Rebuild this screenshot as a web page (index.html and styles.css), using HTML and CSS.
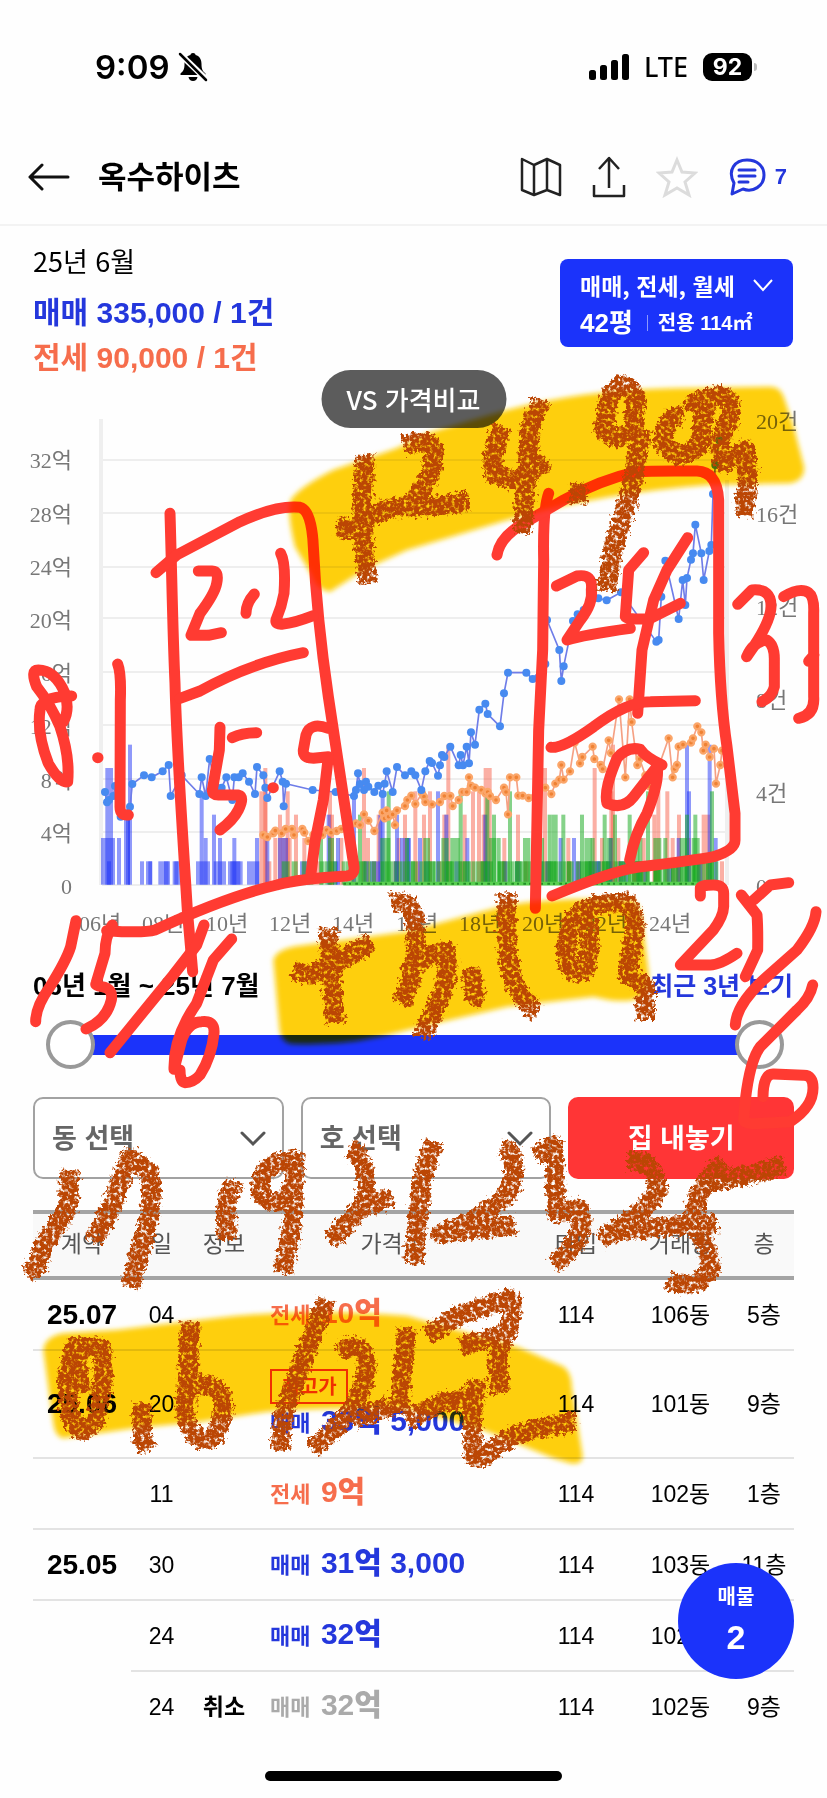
FILE: index.html
```html
<!DOCTYPE html>
<html lang="ko">
<head>
<meta charset="utf-8">
<meta name="viewport" content="width=device-width, initial-scale=1">
<title>옥수하이츠</title>
<link rel="stylesheet" href="styles.css">
</head>
<body>
<div class="page">
  <div class="status">
    <div class="status-left">
      <span class="clock">9:09</span>
      <svg width="30" height="32" viewBox="0 0 30 32"><path d="M15 2c-2 0-2.500 1-2.500 2C8 5 6.500 9 6.500 13c0 5-1 7-4 9.500V24h25v-1.500c-3-2.500-4-4.500-4-9.500 0-4-1.500-8-6-9 0-1-.5-2-2.500-2z"/><path d="M10.500 26h9c-.5 2.500-2 4-4.500 4s-4-1.500-4.500-4z"/><path d="M1 2l28 27" stroke="#fff" stroke-width="6"/><path d="M2 3l26 26" stroke="#000" stroke-width="2.500" stroke-linecap="round"/></svg>
    </div>
    <div class="status-right">
      <svg width="40" height="26" viewBox="0 0 40 26"><rect y="16" width="7" height="10" rx="2.500"/><rect x="11" y="11" width="7" height="15" rx="2.500"/><rect x="22" y="6" width="7" height="20" rx="2.500"/><rect x="33" width="7" height="26" rx="2.500"/></svg>
      <span class="network">LTE</span>
      <span class="battery"><span class="battery-body">92</span><i class="battery-tip"></i></span>
    </div>
  </div>

  <header class="header">
    <button class="icon-button" aria-label="뒤로"><svg width="42" height="28" viewBox="0 0 42 28" fill="none" stroke="#111" stroke-width="3" stroke-linecap="round" stroke-linejoin="round"><path d="M40 14H2M14 2L2 14l12 12"/></svg></button>
    <h1 class="title">옥수하이츠</h1>
    <nav class="actions">
      <button class="icon-button" aria-label="지도"><svg width="42" height="42" viewBox="0 0 42 42" fill="none" stroke="#222" stroke-width="2.500" stroke-linejoin="round"><path d="M2 3l12 6 13-6 13 6v30l-13-5-13 5-12-5zM14 9v30M27 3v31"/></svg></button>
      <button class="icon-button" aria-label="공유"><svg width="34" height="42" viewBox="0 0 34 42" fill="none" stroke="#222" stroke-width="2.500" stroke-linejoin="round"><path d="M17 32V2M7 13L17 2l10 11M2 29v11h30V29"/></svg></button>
      <button class="icon-button" aria-label="관심"><svg width="42" height="42" viewBox="0 0 42 42" fill="none" stroke="#dcdcdc" stroke-width="3"><path d="M21 4l5 12 13 1-10 9 4 13-12-7-12 7 4-13L3 17l13-1z"/></svg></button>
      <button class="chat" aria-label="댓글 7"><svg width="38" height="40" viewBox="0 0 38 40" fill="none" stroke="#2437dc" stroke-width="3" stroke-linejoin="round" stroke-linecap="round"><path d="M4 37l2-11C-1 13 7 3 19 3c10 0 17 6 17 15 0 11-11 18-21 14zM11 13h16M11 19h16M11 25h9"/></svg><span>7</span></button>
    </nav>
  </header>

  <main>
    <section class="summary">
      <div>
        <p class="month">25년 6월</p>
        <p class="deal sale">매매 335,000 / 1건</p>
        <p class="deal lease">전세 90,000 / 1건</p>
      </div>
      <button class="filter">
        <span class="filter-top">매매, 전세, 월세 <svg width="20" height="13" viewBox="0 0 20 13" fill="none" stroke="#fff" stroke-width="2"><path d="M1 1l9 10 9-10"/></svg></span>
        <span class="filter-bottom"><b>42평</b><i></i><small>전용 114㎡</small></span>
      </button>
    </section>

    <section class="chart">
      <svg class="chart-plot" viewBox="0 370 827 580" id="plot">
        <g class="grid-lines"><path d="M102 460H726M102 513H726M102 567H726M102 618H726M102 672H726M102 725H726M102 779H726M102 832H726M102 885H726"/></g>
        <path class="axis" d="M101 419V885M727 480V885"/>
        <g id="series" transform="translate(0 630) scale(.33333)"></g>
        <g class="labels" id="labels"></g>
      </svg>
      <button class="compare">VS 가격비교</button>
    </section>

    <section class="range">
      <div class="range-text"><span class="period">06년 1월 ~ 25년 7월</span><a href="#recent">최근 3년 보기</a></div>
      <div class="slider">
        <input class="slider-input track" type="range" min="0" max="100" value="0" aria-label="시작 월">
        <input class="slider-input" type="range" min="0" max="100" value="100" aria-label="종료 월">
      </div>
    </section>

    <section class="picker">
      <label class="field"><select aria-label="동 선택"><option>동 선택</option></select><svg width="26" height="16" viewBox="0 0 26 16"><path d="M2 2l11 11L24 2"/></svg></label>
      <label class="field"><select aria-label="호 선택"><option>호 선택</option></select><svg width="26" height="16" viewBox="0 0 26 16"><path d="M2 2l11 11L24 2"/></svg></label>
      <button class="sell">집 내놓기</button>
    </section>

    <table class="deals">
      <colgroup><col class="c-month"><col class="c-day"><col class="c-info"><col class="c-price"><col class="c-type"><col class="c-dong"><col class="c-floor"></colgroup>
      <thead><tr><th>계약</th><th>일</th><th>정보</th><th>가격 ↓</th><th>타입</th><th>거래동</th><th>층</th></tr></thead>
      <tbody>
        <tr><td class="ym">25.07</td><td>04</td><td></td><td class="price lease"><span>전세</span> <b>10억</b></td><td>114</td><td>106동</td><td>5층</td></tr>
        <tr class="record"><td class="ym">25.06</td><td>20</td><td></td><td class="price sale"><em>최고가</em><div><span>매매</span> <b>33억 5,000</b></div></td><td>114</td><td>101동</td><td>9층</td></tr>
        <tr><td></td><td>11</td><td></td><td class="price lease"><span>전세</span> <b>9억</b></td><td>114</td><td>102동</td><td>1층</td></tr>
        <tr><td class="ym">25.05</td><td>30</td><td></td><td class="price sale"><span>매매</span> <b>31억 3,000</b></td><td>114</td><td>103동</td><td>11층</td></tr>
        <tr><td class="open"></td><td>24</td><td></td><td class="price sale"><span>매매</span> <b>32억</b></td><td>114</td><td>102동</td><td>7층</td></tr>
        <tr class="last"><td></td><td>24</td><td class="cancel">취소</td><td class="price void"><span>매매</span> <b>32억</b></td><td>114</td><td>102동</td><td>9층</td></tr>
      </tbody>
    </table>
  </main>

  <button class="listing"><span>매물</span><b>2</b></button>
  <div class="home"></div>

  <svg class="ink pen" viewBox="0 0 2481 5394" aria-hidden="true">
    <g id="pen-left">
      <path d="M510 1540C515 1700 518 1900 525 2050C530 2250 548 2500 562 2730L578 2915"/>
      <path d="M468 1718L530 1665L720 1565Q830 1515 900 1522Q935 1530 940 1640Q950 1850 985 2090L1062 2600Q1065 2625 1040 2628Q900 2636 830 2655Q680 2690 465 2790Q430 2800 320 2792"/>
      <path d="M337 2775Q315 2810 315 2860L288 2950Q285 2957 305 2960Q340 2965 334 3000Q320 3060 258 3087"/>
      <path d="M228 2762L212 2840Q200 2880 150 2960Q107 3020 107 3065M612 2775L590 2835L520 2925L330 3158"/>
      <path d="M695 2817L640 2880L590 3010Q520 3110 522 3208L545 3120Q565 3065 605 3065Q645 3060 642 3100Q635 3170 600 3225Q580 3248 555 3248Q540 3245 540 3210"/>
      <path d="M595 1713H635Q658 1712 650 1750Q645 1780 600 1840L573 1906H625L664 1898M763 1782Q738 1810 738 1840M842 1660Q858 1690 852 1780Q845 1820 828 1860Q825 1875 850 1872Q880 1870 940 1847"/>
      <path d="M540 2095L600 2073Q750 1990 910 1958"/>
      <path d="M660 2182L658 2250L637 2370Q637 2385 655 2385H715Q735 2390 715 2430Q700 2460 660 2490M697 2213Q725 2198 770 2198M819 2363h1"/>
      <path d="M985 2185Q930 2165 918 2205L910 2250Q908 2275 940 2275L985 2270L970 2400L945 2525L933 2620"/>
      <path d="M215 2088Q120 2090 120 2130Q110 2200 145 2290Q180 2352 203 2345Q210 2270 180 2180Q150 2110 110 2060Q90 2010 115 2010Q165 2010 195 2080Q210 2130 190 2165M293 2273h1M353 1992Q364 2020 361 2100L360 2420Q360 2448 385 2445"/>
    </g>
    <g id="pen-right">
      <path d="M1646 1480Q1628 1530 1631 1680L1628 1950L1616 2190L1606 2725"/>
      <path d="M1491 1665Q1500 1610 1571 1570L1691 1500Q1800 1440 1911 1415Q1950 1412 2091 1413Q2151 1415 2156 1500L2156 1900Q2160 2100 2181 2240L2205 2440V2520Q2206 2550 2141 2570Q2090 2580 1911 2602Q1830 2615 1656 2688"/>
      <path d="M1669 1758L1731 1728Q1780 1720 1774 1770Q1780 1810 1741 1860L1701 1920Q1750 1905 1891 1885M1931 1658L1886 1710L1876 1850Q1880 1860 1950 1856L2041 1810M2063 1613L2001 1710L1961 1800L1926 1950L1913 2140"/>
      <path d="M1653 2242Q1690 2245 1781 2180Q1880 2105 1951 2105L2086 2102"/>
      <path d="M1986 2295Q1935 2270 1921 2248Q1881 2238 1851 2275Q1810 2370 1821 2410Q1871 2430 1901 2390L1971 2300Q1980 2340 1941 2440Q1905 2500 1889 2580"/>
      <path d="M2213 1813L2256 1770Q2315 1765 2313 1820Q2312 1870 2240 1970Q2260 1925 2300 1920Q2324 1935 2323 1980V2060Q2316 2090 2286 2105M2351 1790Q2400 1760 2426 1778Q2443 1790 2441 1840V2090Q2445 2145 2396 2155M2426 1984L2442 1965"/>
      <path d="M2101 2688V2665Q2101 2655 2140 2655Q2171 2655 2171 2680V2720Q2170 2750 2140 2790L2041 2895H2131Q2160 2895 2211 2860M2224 2685L2271 2745Q2274 2780 2273 2850L2236 2930M2261 2700L2311 2655L2366 2648"/>
      <path d="M2448 2735Q2445 2780 2391 2850L2301 2930Q2210 3010 2206 3075M2438 2955Q2430 2995 2391 3030L2281 3140Q2250 3180 2236 3300L2231 3360Q2235 3375 2290 3370L2371 3365Q2439 3320 2439 3265Q2440 3225 2410 3226L2321 3222Q2290 3220 2289 3290"/>
    </g>
  </svg>

  <svg class="ink marker" viewBox="0 0 2481 5394" aria-hidden="true">
    <defs><filter id="soft"><feGaussianBlur stdDeviation="8"/></filter></defs>
    <g filter="url(#soft)">
      <path d="M872 1500Q900 1460 1000 1410L1190 1345L1281 1300L1521 1230Q1750 1170 2021 1165L2311 1160Q2340 1160 2351 1190L2381 1280L2412 1400Q2415 1440 2371 1450L2121 1455Q1800 1480 1521 1560L1221 1650L1100 1705L990 1775Q950 1770 935 1725L885 1640Q860 1540 872 1500Z"/>
      <path d="M820 2880Q830 2845 900 2837L1220 2795L1521 2715Q1700 2690 1890 2700Q1915 2700 1926 2760L1946 2920Q1946 2980 1921 2990Q1881 3015 1781 2990L1521 3020L1221 3090Q1050 3140 880 3132Q840 3130 838 3080Z"/>
      <path d="M130 4050Q135 4010 190 4000L350 3990L600 3960Q900 3920 1221 3948L1551 4040L1691 4100Q1715 4120 1715 4160L1748 4370Q1745 4395 1711 4390L1661 4375L1451 4290L1221 4225Q1000 4220 800 4235L600 4265L400 4285L190 4315Q165 4310 160 4270Z"/>
    </g>
  </svg>

  <svg class="ink crayon" viewBox="0 0 2481 5394" aria-hidden="true">
    <defs>
      <filter id="wax" x="0" y="0" width="2481" height="5394" filterUnits="userSpaceOnUse" color-interpolation-filters="sRGB">
        <feTurbulence type="fractalNoise" baseFrequency=".09" numOctaves="3" seed="4" result="n"/>
        <feDisplacementMap in="SourceGraphic" in2="n" scale="36" xChannelSelector="R" yChannelSelector="G" result="d"/>
        <feColorMatrix in="n" type="matrix" values="0 0 0 0 0  0 0 0 0 0  0 0 0 0 0  0 0 4 0 -.95" result="g"/>
        <feComposite in="d" in2="g" operator="in"/>
        <feGaussianBlur stdDeviation="1.800"/>
      </filter>
    </defs>
    <g filter="url(#wax)">
      <path d="M1095 1365L1085 1560L1102 1750M1010 1580L1060 1590L1150 1530L1230 1515M1210 1335Q1290 1310 1300 1355Q1310 1420 1225 1520L1300 1520L1405 1503"/>
      <path d="M1506 1280Q1470 1370 1481 1420L1551 1445L1640 1380M1625 1200L1591 1280L1580 1430L1566 1600M1736 1450L1735 1510"/>
      <path d="M1901 1180Q1860 1120 1826 1200L1811 1290Q1860 1335 1901 1280L1908 1170M1926 1290L1891 1480L1841 1640L1818 1770"/>
      <path d="M2051 1245Q1990 1250 1991 1330Q2030 1390 2096 1340L2121 1200L2080 1210L2150 1185Q2210 1190 2186 1260L2156 1330L2171 1390L2236 1350L2245 1430L2231 1550"/>
      <path d="M985 2785L990 2900L1006 3070M880 2912L930 2925L1010 2890L1115 2825M1172 2708Q1240 2690 1245 2780Q1265 2880 1204 3010M1220 2920Q1290 2850 1341 2855Q1350 2940 1310 3020L1266 3110M1411 2905L1425 2990L1450 2995M1521 2680L1521 2840Q1530 2980 1610 3035"/>
      <path d="M1781 2760Q1710 2710 1701 2830Q1690 2930 1751 2915Q1780 2860 1761 2750L1741 2735Q1800 2700 1881 2710Q1915 2760 1901 2820L1881 2920L1936 2960L1936 3060"/>
      <path d="M210 3510L205 3620L130 3740L110 3800L80 3820M280 3725L330 3630L390 3470L450 3520Q465 3600 430 3720L390 3860M705 3545L678 3600L682 3720M875 3485Q780 3480 780 3580Q840 3640 880 3560L884 3480L875 3690L848 3820M1050 3445Q1110 3480 1095 3610L990 3725M1100 3620L1175 3590"/>
      <path d="M1301 3425L1266 3540L1246 3720L1242 3790M1506 3440Q1560 3460 1531 3570Q1470 3650 1321 3700L1545 3676M1606 3470L1661 3435L1671 3640L1736 3625Q1770 3710 1661 3795M1881 3480Q1970 3480 1971 3570Q1950 3630 1801 3720M1850 3695L2000 3680L2150 3670M2171 3485Q2080 3570 2081 3670Q2135 3760 2131 3810Q2080 3880 2006 3840M2110 3550Q2220 3535 2355 3495"/>
      <path d="M225 4040Q190 4120 210 4240Q240 4330 285 4260Q320 4150 305 4045L225 4040L245 4180M425 4210L428 4320L445 4350M570 3965L565 4110L555 4240Q580 4340 640 4315Q700 4200 640 4160L590 4150M980 3900L920 4050L850 4250L838 4350M1015 4055Q1100 4010 1100 4110Q1080 4240 935 4345M1060 4260L1170 4220"/>
      <path d="M1221 3985L1195 4240M1220 4260L1320 4210L1420 4190M1281 4005L1380 3945L1530 3895Q1545 3930 1521 4000L1381 4040M1511 4000L1491 4090L1500 4180M1431 4140L1416 4250L1421 4370Q1440 4390 1500 4330Q1580 4285 1725 4265"/>
    </g>
  </svg>
</div>
<script src="script.js"></script>
</body>
</html>
```

FILE: styles.css
```css
* { box-sizing: border-box; }
body { margin: 0; background: #fefefe; color: #111; font-family: "Liberation Sans", "Noto Sans CJK KR", sans-serif; }
button, select, input { font: inherit; color: inherit; }
button { border: 0; padding: 0; background: none; }
p, h1 { margin: 0; }
svg { display: block; }
.page { position: relative; overflow: hidden; }

.status { height: 130px; padding: 4px 70px 0 95px; display: flex; align-items: center; justify-content: space-between; color: #000; }
.status-left, .status-right { display: flex; align-items: center; }
.status-left { gap: 8px; }
.clock { font: 600 33px/40px Inter, sans-serif; }
.status-right { gap: 15px; }
.network { font: 500 27px/32px "Noto Sans", sans-serif; }
.battery { display: flex; align-items: center; gap: 2px; }
.battery-body { width: 49px; height: 28px; border-radius: 9px; background: #000; color: #fff; font: 700 23px/28px Inter, sans-serif; text-align: center; }
.battery-tip { width: 3px; height: 8px; border-radius: 0 3px 3px 0; background: #bbb; }

.header { height: 96px; padding: 0 40px 0 28px; display: flex; align-items: center; border-bottom: 2px solid #f3f3f3; }
.title { margin-left: 28px; padding-bottom: 4px; flex: 1; font: 700 31px/44px "Noto Sans CJK KR", sans-serif; color: #000; }
.actions { display: flex; align-items: center; gap: 30px; }
.chat { display: flex; align-items: center; gap: 9px; color: #2437dc; font-weight: 700; font-size: 22px; }

.summary { height: 144px; padding: 12px 34px 0 33px; display: flex; justify-content: space-between; align-items: flex-start; }
.month { font: 400 27px/46px "Noto Sans CJK KR", sans-serif; color: #000; }
.deal { font-size: 30px; line-height: 45px; font-weight: 700; padding-top: 6px; }
.deal + .deal { padding-top: 0; }
.sale { color: #2437dc; }
.lease { color: #f66d4c; }
.filter { width: 233px; height: 88px; margin-top: 21px; padding: 4px 20px; border-radius: 8px; background: #1b33fa; color: #fff; text-align: left; }
.filter-top { display: flex; align-items: center; justify-content: space-between; font: 700 23px/40px "Noto Sans CJK KR", sans-serif; white-space: nowrap; }
.filter-bottom { display: flex; align-items: center; gap: 14px; line-height: 36px; }
.filter-bottom b { font-size: 26px; }
.filter-bottom i { width: 1px; height: 16px; background: #8d99fc; }
.filter-bottom small { font-size: 20px; font-weight: 700; margin-left: -4px; }

.chart { position: relative; }
.chart-plot { width: 100%; height: auto; }
.compare { position: absolute; top: 0; left: 50%; transform: translateX(-50%); width: 185px; height: 58px; border-radius: 29px; background: #5c5c5c; color: #fff; font: 500 26px/54px "Noto Sans CJK KR", sans-serif; white-space: nowrap; }
.grid-lines { stroke: #eee; stroke-width: 2; }
.axis { stroke: #efefef; stroke-width: 4; }
.labels text { font: 22px "Liberation Serif", "Noto Sans CJK KR", serif; fill: #777; }
.bar-sale { fill: #2034f5; fill-opacity: .5; }
.bar-lease { fill: #f7604a; fill-opacity: .5; }
.bar-rent { fill: #16a81c; fill-opacity: .52; }
.line-sale { fill: none; stroke: #6f7de8; stroke-width: 5; }
.line-lease { fill: none; stroke: #f5a083; stroke-width: 5; }
.dot-sale { fill: #478af0; }
.dot-lease { fill: #ef8234; stroke: #fbA66a; stroke-width: 7; }
.rent-base { stroke: #58cf50; stroke-width: 11; }
.rent-dots { stroke: #238e27; stroke-width: 6; stroke-dasharray: 8 9 6 13; }

.range { padding: 16px 34px 0 33px; }
.range-text { display: flex; justify-content: space-between; font-size: 25px; line-height: 40px; font-weight: 700; color: #000; }
.period { font-size: 26px; }
.range-text a { color: #2437dc; text-decoration: none; }
.slider { display: grid; margin: 14px 9px 0 13px; height: 50px; align-items: center; }
.slider-input { grid-area: 1 / 1; width: 100%; height: 50px; margin: 0; appearance: none; background: none; pointer-events: none; }
.slider-input::-webkit-slider-runnable-track { height: 20px; }
.track::-webkit-slider-runnable-track { background: linear-gradient(#1b33fa, #1b33fa) center / calc(100% - 48px) 100% no-repeat; }
.slider-input::-webkit-slider-thumb { appearance: none; pointer-events: auto; width: 49px; height: 49px; margin-top: -15px; border: 4px solid #999; border-radius: 50%; background: #fff; }

.picker { display: grid; grid-template-columns: 250fr 250fr 225fr; gap: 17px; padding: 27px 33px 0; }
.field { position: relative; display: block; }
.field select { width: 100%; height: 82px; padding: 0 17px 4px; appearance: none; border: 2px solid #a2a2a2; border-radius: 10px; background: #fff; color: #666; font: 700 27px "Noto Sans CJK KR", sans-serif; }
.field svg { position: absolute; right: 18px; top: 34px; fill: none; stroke: #555; stroke-width: 3; stroke-linecap: round; }
.sell { height: 82px; padding-bottom: 4px; border-radius: 10px; background: #ff3536; color: #fff; font: 700 27px "Noto Sans CJK KR", sans-serif; }

.deals { width: calc(100% - 66px); margin: 31px 33px 0; table-layout: fixed; border-collapse: separate; border-spacing: 0; font-size: 23px; color: #000; }
.c-month { width: 98px; } .c-day { width: 61px; } .c-info { width: 64px; } .c-type { width: 102px; } .c-dong { width: 107px; } .c-floor { width: 60px; }
.deals th { height: 70px; padding: 0 0 6px; background: #f9f9f9; border-top: 4px solid #a4a4a4; border-bottom: 4px solid #a4a4a4; font-weight: 400; font-size: 23px; color: #555; white-space: nowrap; }
.deals td { height: 71px; padding: 0; border-bottom: 2px solid #e3e3e3; text-align: center; white-space: nowrap; line-height: 24px; }
.deals .record td { height: 108px; }
.deals .last td, .deals td.open { border-bottom-color: transparent; }
.deals .ym { font-weight: 700; font-size: 28px; }
.deals .cancel { font-weight: 700; }
.deals td.price { padding-left: 14px; text-align: left; font-weight: 700; line-height: 34px; }
.price span { font-weight: 700; font-size: 22px; margin-right: 4px; }
.price b { font-size: 30px; }
.price em { display: block; width: 78px; height: 35px; margin-top: 2px; border: 2px solid #f03a20; color: #f03a20; font: 700 20px/29px "Noto Sans CJK KR", sans-serif; text-align: center; }
.deals .void { color: #aaa; }

.listing { position: absolute; right: 33px; bottom: 119px; width: 116px; height: 116px; border-radius: 50%; background: #1b33fa; color: #fff; display: flex; flex-direction: column; align-items: center; justify-content: center; gap: 8px; padding-bottom: 6px; }
.listing span { font: 700 20px/30px "Noto Sans CJK KR", sans-serif; }
.listing b { font-size: 34px; line-height: 36px; }
.home { width: 36%; height: 10px; margin: 28px auto 17px; border-radius: 5px; background: #000; }

.ink { position: absolute; top: 0; left: 0; width: 100%; height: auto; pointer-events: none; }
.pen { fill: none; stroke: #ff3b32; stroke-width: 33; stroke-linecap: round; stroke-linejoin: round; }
.marker { fill: #ffd00c; mix-blend-mode: multiply; }
.crayon { fill: none; stroke: #bb4604; stroke-width: 58; stroke-linejoin: round; }
```

FILE: script.js
```js
const NS = "http://www.w3.org/2000/svg";
const series = document.getElementById("series");
const labels = document.getElementById("labels");

function add(parent, tag, attrs, text) {
  const el = document.createElementNS(NS, tag);
  for (const k in attrs) el.setAttribute(k, attrs[k]);
  if (text) el.textContent = text;
  parent.appendChild(el);
}

const BASE = 764;
const UNIT = 70;

// x, number of deals, optional width
const lease = [[778,4,24],[790,5],[802,1],[820,2],[834,3],[857,4],[845,2,30],[882,3],[907,2],[930,1,30],[984,4],[990,3],[1018,2],[1086,5],[1098,2],[1130,3],[1190,2],[1209,3],[1240,4],[1266,3],[1284,4],[1327,3],[1339,6],[1388,3],[1413,4],[1431,4],[1445,3],[1451,5,24],[1507,2],[1548,3],[1600,2],[1629,5],[1699,2],[1730,1],[1778,5],[1800,2],[1833,6],[1828,4],[1849,2],[1900,1],[1925,2],[1957,3],[1969,4],[1996,4],[2012,2],[2031,3],[2060,2],[2105,3,26],[2160,1]];
const sale = [[303,2,42],[316,5,23],[321,1],[351,2],[372,3,18],[378,3],[384,6],[420,1],[438,1,18],[445,1],[475,1,35],[492,1,14],[518,1,24],[523,1],[588,1,42],[599,4],[611,2],[636,3],[641,1,37],[654,2],[684,1,44],[697,2],[691,1,30],[741,1,37],[765,2],[796,2],[834,2,30],[900,1,30],[980,3],[1008,2],[1056,4],[1110,1,30],[1142,4],[1135,3],[1185,3],[1200,2,30],[1221,2],[1254,2],[1308,4],[1333,3],[1396,2],[1450,3],[1510,1],[1600,1,30],[1676,2],[1716,2],[1765,1,36],[1790,1],[1826,2],[1855,1,30],[1930,1],[2030,2],[2055,6],[2061,4],[2123,6],[2141,2]];
const rent = [[845,1,24],[875,1,18],[905,1,14],[920,1,20],[957,2],[984,2,18],[1074,3],[1085,1],[1141,2,30],[1160,4],[1215,2],[1270,2,20],[1351,2,28],[1376,4],[1456,4],[1476,3],[1490,2],[1524,4],[1569,2,22],[1643,3],[1655,3,18],[1684,3],[1740,3],[1772,2],[1808,3],[1820,2,18],[1839,3],[1883,3],[1915,2],[1938,4],[1960,2,24],[1990,2],[2055,3],[2080,3],[2075,2,24],[2130,4]];

for (let x = 960, i = 0; x < 2150; x += 13, i++) {
  if (i % 9 !== 4) rent.push([x, 1, 12]);
  if (i % 4 === 1 && x > 1220) rent.push([x, 1, 20]);
  if (i % 5 === 2) lease.push([x, 1, 14]);
  if (i % 7 === 3) sale.push([x, 1, 16]);
  if (i % 11 === 6 && x > 1220) rent.push([x, 2, 22]);
}

for (const [cls, rows] of [["bar-lease", lease], ["bar-sale", sale], ["bar-rent", rent]]) {
  for (const [x, n, w = 12] of rows) add(series, "rect", { class: cls, x, y: BASE - n * UNIT, width: w, height: n * UNIT });
}
add(series, "path", { class: "rent-base", d: "M1030 761H2150" });
add(series, "path", { class: "rent-dots", d: "M1030 761H2150" });

const leaseLine = "790,615 802,621 820,610 826,602 845,610 857,597 876,597 882,615 907,597 913,608 925,633 940,615 967,615 980,600 993,608 1010,603 1024,597 1045,600 1068,580 1080,585 1092,553 1105,572 1123,603 1148,548 1154,565 1160,541 1166,560 1178,553 1185,585 1191,541 1215,528 1222,510 1234,497 1246,522 1266,490 1272,500 1276,516 1296,523 1320,516 1333,498 1351,498 1358,528 1376,510 1387,486 1400,486 1407,442 1413,467 1425,473 1444,480 1456,490 1463,486 1470,498 1488,510 1512,473 1518,486 1524,553 1530,442 1549,442 1555,497 1568,497 1586,504 1611,480 1636,473 1654,492 1666,461 1678,449 1684,405 1691,449 1710,424 1724,338 1740,400 1747,381 1778,350 1783,387 1802,405 1808,417 1826,331 1833,369 1857,208 1876,442 1889,208 1895,276 1912,405 1919,387 1936,436 1949,470 1976,410 2006,325 2018,442 2024,417 2031,405 2036,350 2049,344 2073,338 2079,325 2092,289 2104,307 2110,362 2117,344 2129,381 2142,356 2148,461 2161,405 2166,362";
const saleLine = "315,486 321,517 327,510 340,498 345,468 362,560 390,530 397,462 432,436 455,442 488,424 506,405 512,498 545,436 598,492 605,442 617,498 629,387 648,470 665,473 679,442 697,510 703,442 716,442 728,430 747,455 765,492 771,411 790,436 796,473 802,504 839,424 848,455 851,529 858,461 938,480 1007,486 1062,498 1068,480 1074,430 1080,462 1092,480 1098,455 1105,470 1123,486 1135,467 1148,492 1154,461 1160,424 1178,486 1191,411 1215,436 1234,424 1246,436 1264,480 1276,424 1289,393 1296,399 1314,437 1320,406 1326,375 1333,381 1351,350 1376,406 1382,375 1389,406 1400,350 1407,400 1413,307 1425,344 1438,239 1456,221 1463,252 1500,289 1512,190 1524,128 1579,128 1598,147 1636,102 1641,-30 1678,60 1684,153 1691,109 1719,-27 1733,-47 1751,-60 1795,-95 1820,-89 1863,-113 1969,35 1976,30 1984,-100 1996,-208 2036,-33 2048,-150 2056,-75 2061,-156 2073,-211 2079,-230 2086,-316 2104,-230 2111,-150 2128,-237 2134,-255 2139,-408 2146,-495 2158,-569";

for (const [name, points, r] of [["lease", leaseLine, 9], ["sale", saleLine, 12]]) {
  add(series, "polyline", { class: "line-" + name, points });
  for (const p of points.split(" ")) {
    const [cx, cy] = p.split(",");
    add(series, "circle", { class: "dot-" + name, cx, cy, r });
  }
}

for (let i = 0; i <= 8; i++) add(labels, "text", { x: 72, y: 894 - Math.round(i * 53.2), "text-anchor": "end" }, i ? i * 4 + "억" : "0");
for (let i = 0; i <= 5; i++) add(labels, "text", { x: 756, y: 894 - i * 93 }, i ? i * 4 + "건" : "0");
for (let i = 0; i < 10; i++) add(labels, "text", { x: 100 + Math.round(i * 63.3), y: 931, "text-anchor": "middle" }, String(6 + i * 2).padStart(2, "0") + "년");
```
